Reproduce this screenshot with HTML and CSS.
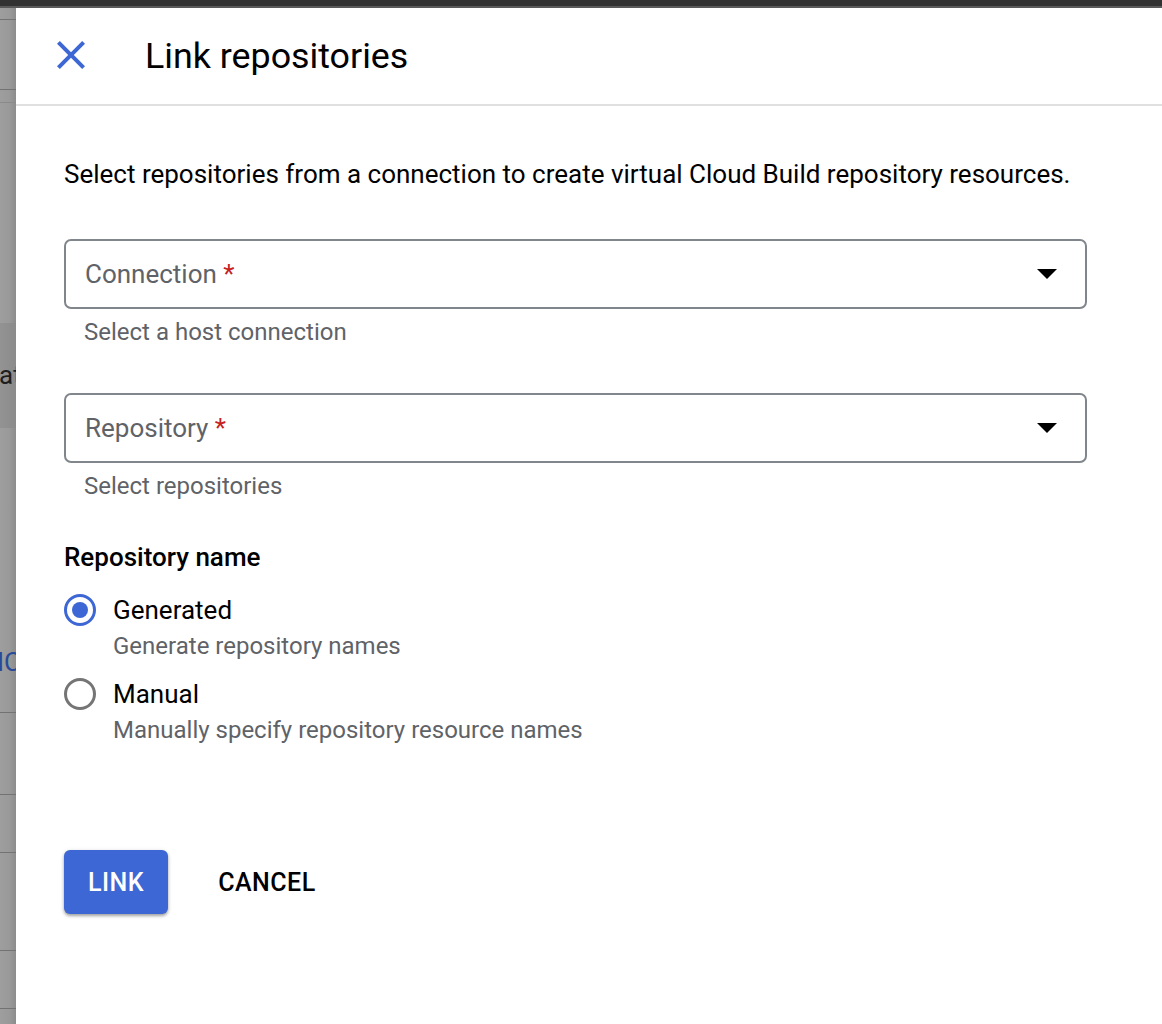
FILE: index.html
```html
<!DOCTYPE html>
<html>
<head>
<meta charset="utf-8">
<link rel="stylesheet" href="styles.css">
</head>
<body>
<div class="topbar"></div>
<div class="main">
  <div class="backdrop">
    <div class="bd-row r1 line"></div>
    <div class="bd-row r2 line"></div>
    <div class="bd-row r3 line-light"></div>
    <div class="bd-row r4"></div>
    <div class="bd-row band"><span class="bd-text">at</span></div>
    <div class="bd-row r6 line"><span class="bd-link">IC</span></div>
    <div class="bd-row r7 line"></div>
    <div class="bd-row r8 line"></div>
    <div class="bd-row r9 line"></div>
    <div class="bd-row r10 line"></div>
    <div class="bd-row r11"></div>
  </div>
  <div class="panel">
    <header class="panel-header">
      <button class="close-btn" aria-label="Close">
        <svg width="48" height="48" viewBox="0 0 24 24"><path d="M19 6.41L17.59 5 12 10.59 6.41 5 5 6.41 10.59 12 5 17.59 6.41 19 12 13.41 17.59 19 19 17.59 13.41 12z" fill="#3d67d4"/></svg>
      </button>
      <h1 class="title">Link repositories</h1>
    </header>
    <div class="content">
      <p class="desc">Select repositories from a connection to create virtual Cloud Build repository resources.</p>

      <div class="field">
        <span class="field-label">Connection <span class="req">*</span></span>
        <span class="caret"></span>
      </div>
      <div class="hint">Select a host connection</div>

      <div class="field field-second">
        <span class="field-label">Repository <span class="req">*</span></span>
        <span class="caret"></span>
      </div>
      <div class="hint">Select repositories</div>

      <div class="section-title">Repository name</div>

      <div class="radio-option">
        <span class="radio checked"></span>
        <div class="radio-text">
          <div class="radio-label">Generated</div>
          <div class="radio-sub">Generate repository names</div>
        </div>
      </div>
      <div class="radio-option second">
        <span class="radio"></span>
        <div class="radio-text">
          <div class="radio-label">Manual</div>
          <div class="radio-sub">Manually specify repository resource names</div>
        </div>
      </div>

      <div class="actions">
        <button class="btn-primary">LINK</button>
        <button class="btn-text">CANCEL</button>
      </div>
    </div>
  </div>
</div>
</body>
</html>
```
FILE: styles.css
```css
* { box-sizing: border-box; }
html, body { margin: 0; padding: 0; }
body {
  width: 1162px;
  height: 1024px;
  overflow: hidden;
  font-family: Roboto, "Liberation Sans", Arial, sans-serif;
  background: #fff;
  color: #202124;
}
.topbar {
  height: 8px;
  background: #323232;
  border-bottom: 2px solid #5a5a5a;
}
.main {
  display: flex;
  height: 1016px;
}
.backdrop {
  width: 16px;
  flex: none;
  display: flex;
  flex-direction: column;
  overflow: hidden;
  background: linear-gradient(to right, #9e9e9e 0%, #999 60%, #8c8c8c 100%);
}
.bd-row { flex: none; overflow: hidden; }
.line { border-bottom: 1px solid #727272; }
.line-light { border-bottom: 1px solid #8a8a8a; }
.r1 { height: 12px; }
.r2 { height: 70px; }
.r3 { height: 13px; }
.r4 { height: 220px; }
.band { height: 105px; background: linear-gradient(to right, #939393, #8b8b8b); }
.r6 { height: 285px; }
.r7 { height: 82px; }
.r8 { height: 58px; }
.r9 { height: 98px; }
.r10 { height: 58px; }
.r11 { height: 20px; }
.bd-text {
  display: block;
  margin-top: 38px;
  margin-left: -1px;
  font-size: 26px;
  color: #1e1e1e;
  line-height: 28px;
}
.bd-link {
  display: block;
  margin-top: 220px;
  margin-left: -3px;
  font-size: 26px;
  color: #274a9a;
  line-height: 28px;
}
.panel {
  flex: 1;
  background: #fff;
}
.panel-header {
  height: 98px;
  display: flex;
  align-items: center;
  border-bottom: 2px solid #e0e0e0;
}
.close-btn {
  width: 48px;
  height: 48px;
  padding: 0;
  margin-left: 31px;
  margin-top: -2px;
  border: 0;
  background: none;
  display: flex;
}
.title {
  margin: 0 0 0 50px;
  font-size: 35.8px;
  font-weight: 400;
  color: #000;
  line-height: 40px;
}
.content {
  padding: 50px 75px 0 48px;
}
.desc {
  margin: 0;
  font-size: 26px;
  line-height: 36px;
  color: #000;
  white-space: nowrap;
}
.field {
  margin-top: 47px;
  height: 70px;
  width: 1023px;
  border: 2px solid #80868b;
  border-radius: 7px;
  display: flex;
  align-items: center;
  justify-content: space-between;
  padding: 0 28px 0 19px;
}
.field-label {
  font-size: 26px;
  color: #5f6368;
  line-height: 32px;
}
.req { color: #c5221f; }
.caret {
  width: 0;
  height: 0;
  border-left: 10px solid transparent;
  border-right: 10px solid transparent;
  border-top: 10px solid #000;
}
.hint {
  margin-top: 9px;
  padding-left: 20px;
  font-size: 24px;
  line-height: 28px;
  color: #5f6368;
}
.section-title {
  margin-top: 41px;
  font-size: 26px;
  line-height: 32px;
  font-weight: 500;
  color: #000;
}
.radio-option {
  margin-top: 21px;
  display: flex;
  align-items: flex-start;
}
.radio-option.second { margin-top: 18px; }
.radio {
  width: 32px;
  height: 32px;
  flex: none;
  border: 3px solid #757575;
  border-radius: 50%;
  display: flex;
  align-items: center;
  justify-content: center;
}
.radio.checked { border-color: #3d67d4; }
.radio.checked::after {
  content: "";
  width: 16px;
  height: 16px;
  border-radius: 50%;
  background: #3d67d4;
}
.radio-text { margin-left: 17px; }
.radio-label {
  font-size: 26px;
  line-height: 32px;
  color: #000;
}
.radio-sub {
  margin-top: 6px;
  font-size: 24px;
  line-height: 28px;
  color: #5f6368;
}
.actions {
  margin-top: 106px;
  display: flex;
  align-items: center;
}
.btn-primary {
  height: 64px;
  padding: 0 24px;
  border: 0;
  border-radius: 6px;
  background: #3d67d4;
  color: #fff;
  font-family: inherit;
  font-size: 25px;
  font-weight: 500;
  letter-spacing: 0.5px;
  box-shadow: 0 2px 3px rgba(0,0,0,0.3), 0 1px 5px rgba(0,0,0,0.12);
}
.btn-text {
  margin-left: 26px;
  height: 64px;
  padding: 0 24px;
  border: 0;
  background: none;
  color: #000;
  font-family: inherit;
  font-size: 25px;
  font-weight: 500;
  letter-spacing: 0.5px;
}
```
